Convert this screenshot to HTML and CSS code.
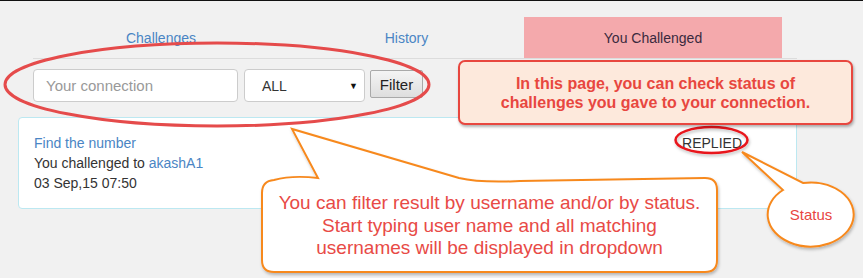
FILE: index.html
```html
<!DOCTYPE html>
<html>
<head>
<meta charset="utf-8">
<link rel="stylesheet" href="styles.css">
</head>
<body>
<div class="page">
  <nav class="tabs">
    <a class="tab tab-1">Challenges</a>
    <a class="tab tab-2">History</a>
    <a class="tab tab-3 active">You Challenged</a>
  </nav>
  <div class="filters">
    <input class="conn" type="text" placeholder="Your connection">
    <div class="select"><span>ALL</span><span class="caret">&#9660;</span></div>
    <button class="btn">Filter</button>
  </div>
  <div class="card">
    <div class="info">
      <a class="title">Find the number</a>
      <div>You challenged to <a class="user">akashA1</a></div>
      <div>03 Sep,15 07:50</div>
    </div>
    <div class="status">REPLIED</div>
  </div>
</div>

<svg class="overlay" width="863" height="278" viewBox="0 0 863 278">
  <defs>
    <filter id="sh" x="-10%" y="-10%" width="120%" height="130%">
      <feDropShadow dx="1" dy="2" stdDeviation="1.5" flood-color="#000" flood-opacity="0.25"/>
    </filter>
  </defs>
  <ellipse cx="217" cy="84.5" rx="212" ry="41.5" fill="none" stroke="#e54b4b" stroke-width="3"/>
  <path d="M 274 180 Q 292 175 318 178 L 292 129 L 459 178 Q 480 183 520 181 L 705 178 Q 717 178 717 190 L 717 260 Q 717 272 705 272 L 274 272 Q 262 272 262 260 L 262 193 Q 262 181 274 180 Z" fill="#fff" stroke="#f7891f" stroke-width="2" filter="url(#sh)"/>
  <ellipse cx="711.5" cy="140" rx="36" ry="13" fill="none" stroke="#e8141b" stroke-width="2.5" filter="url(#sh)"/>
  <path d="M 803 183 A 43 32 0 1 1 783 190 L 742 152 Z" fill="#fff" stroke="#f7891f" stroke-width="2" filter="url(#sh)"/>
</svg>

<div class="note note-top">In this page, you can check status of<br>challenges you gave to your connection.</div>
<div class="note note-filter">You can filter result by username and/or by status.<br>Start typing user name and all matching<br>usernames will be displayed in dropdown</div>
<div class="note note-status">Status</div>
</body>
</html>
```

FILE: styles.css
```css
html, body {
  margin: 0;
  padding: 0;
}
body {
  width: 863px;
  height: 278px;
  overflow: hidden;
  background: #f1f1f1;
  border-top: 1px solid #111;
  box-sizing: border-box;
  font-family: "Liberation Sans", Arial, sans-serif;
  font-size: 14px;
  color: #333;
  position: relative;
}
.page {
  padding: 16px 0 0 18px;
  width: 779px;
}
.tabs {
  display: flex;
  margin-left: 15px;
  width: 764px;
  height: 41px;
  border-bottom: 1px solid #dcdcdc;
}
.tab {
  display: flex;
  align-items: center;
  justify-content: center;
  color: #4a85c4;
  font-size: 14px;
  padding-top: 1px;
}
.tab-1 { width: 256px; }
.tab-2 { width: 235px; }
.tab-3 { width: 258px; }
.tab.active {
  background: #f4a9ac;
  color: #3a2a3e;
}
.filters {
  display: flex;
  align-items: flex-start;
  gap: 6px;
  margin: 10px 0 0 15px;
}
.conn {
  width: 205px;
  height: 33px;
  box-sizing: border-box;
  border: 1px solid #ccc;
  border-radius: 4px;
  padding: 0 12px;
  font-family: "Liberation Sans", Arial, sans-serif;
  font-size: 15px;
  background: #fff;
  margin: 0;
}
.conn::placeholder { color: #999; }
.select {
  width: 121px;
  height: 33px;
  box-sizing: border-box;
  border: 1px solid #ccc;
  border-radius: 4px;
  background: #fff;
  display: flex;
  align-items: center;
  justify-content: space-between;
  padding: 1px 6px 0 17px;
  font-size: 14px;
  color: #333;
}
.caret {
  font-size: 9px;
  color: #111;
}
.btn {
  margin: 1px 0 0 -1px;
  width: 53px;
  height: 28px;
  border: 1px solid #a9a9a9;
  border-radius: 2px;
  background: linear-gradient(#f4f4f4, #dedede);
  font-family: "Liberation Sans", Arial, sans-serif;
  font-size: 15px;
  color: #222;
  padding: 0;
}
.card {
  margin-top: 15px;
  background: #fff;
  border: 1px solid #bce8f1;
  border-radius: 4px;
  padding: 15px;
  display: flex;
  justify-content: space-between;
  line-height: 20px;
  color: #333;
}
.title, .user { color: #4a85c4; }
.status {
  margin-right: 39px;
  color: #333;
}
.overlay {
  position: absolute;
  left: 0;
  top: -1px;
  pointer-events: none;
}
.note {
  position: absolute;
  box-sizing: border-box;
  display: flex;
  align-items: center;
  justify-content: center;
  text-align: center;
}
.note-top {
  left: 458px;
  top: 59px;
  width: 395px;
  height: 65px;
  background: #fde9dc;
  border: 2px solid #e8473f;
  border-radius: 7px;
  box-shadow: 1px 2px 3px rgba(0,0,0,0.3);
  color: #e8473f;
  font-weight: bold;
  font-size: 16px;
  line-height: 19px;
  padding-top: 1px;
}
.note-filter {
  left: 262px;
  top: 178px;
  width: 455px;
  height: 94px;
  color: #e84a46;
  font-size: 19px;
  line-height: 22.5px;
}
.note-status {
  left: 768px;
  top: 198px;
  width: 86px;
  height: 30px;
  color: #e8453f;
  font-size: 15px;
}
```
